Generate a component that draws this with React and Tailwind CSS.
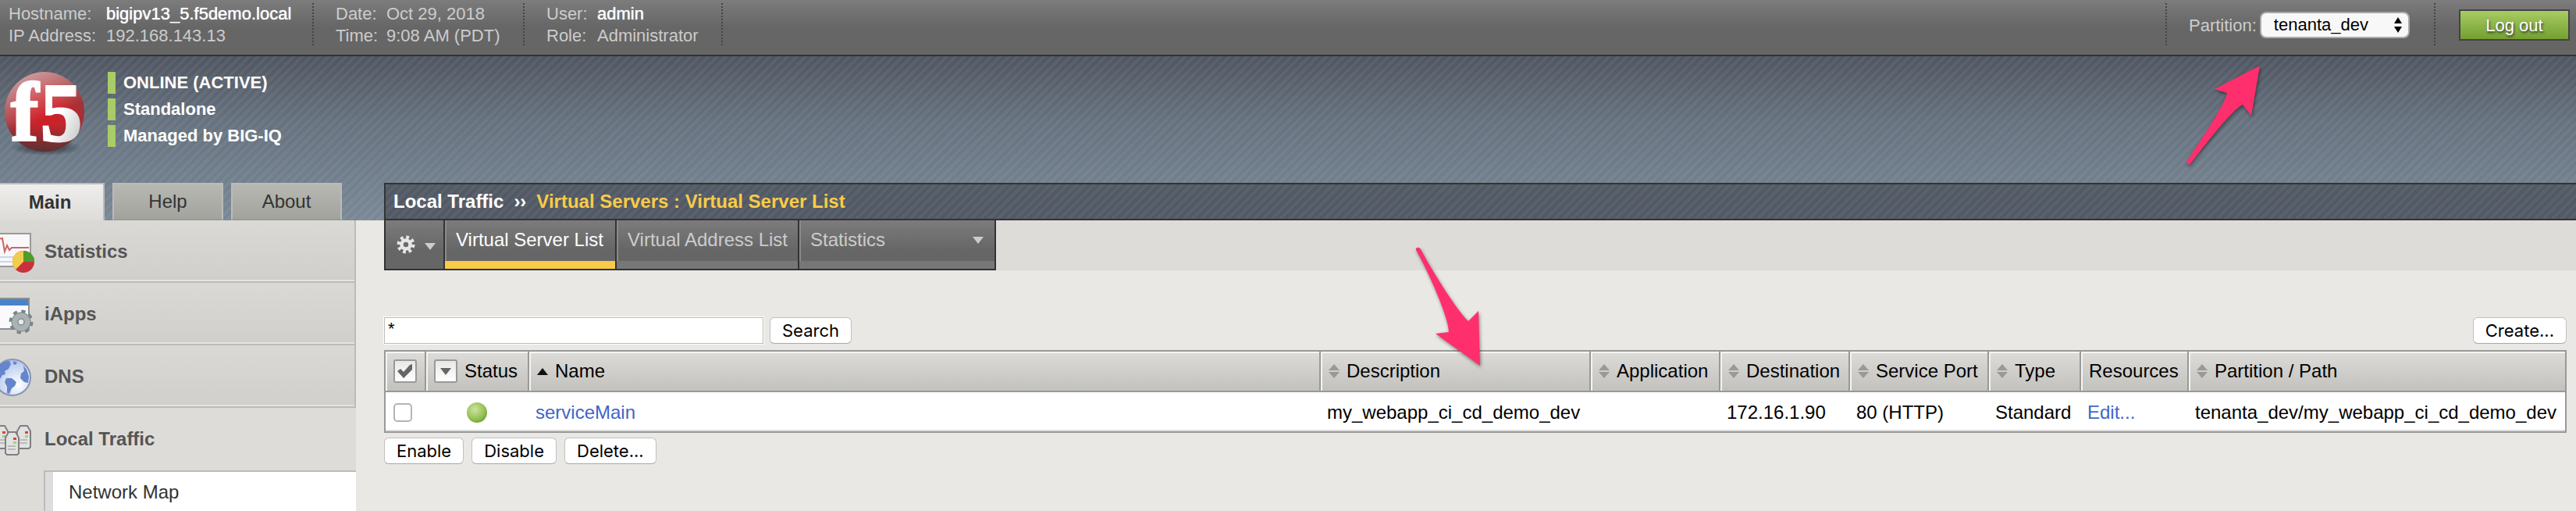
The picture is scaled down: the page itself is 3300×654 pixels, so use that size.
import React from "react";

const stripes =
  "bg-[repeating-linear-gradient(135deg,#ffffff0d_0px,#ffffff0d_4px,transparent_4px,transparent_8px)]";

function HeaderInfo({ rows, layout }) {
  return (
    <dl className={`grid leading-7 ${layout}`}>
      {rows.map(([label, value, strong]) => (
        <React.Fragment key={label}>
          <dt>{label}</dt>
          <dd className={strong ? "text-white [text-shadow:0_0_1px_#fff]" : ""}>{value}</dd>
        </React.Fragment>
      ))}
    </dl>
  );
}

function Dots() {
  return (
    <span className="h-14 w-[2px] shrink-0 bg-[repeating-linear-gradient(180deg,#444_0px,#444_2px,transparent_2px,transparent_4px)]" />
  );
}

function TopBar() {
  return (
    <header className="flex h-[72px] items-start justify-between border-b-2 border-[#333] bg-linear-to-b from-[#7c7c7c] to-[#666] to-50% pt-1 pr-2 text-[22px] text-[#ccc]">
      <div className="flex">
        <HeaderInfo
          layout="w-[400px] grid-cols-[125px_1fr] pl-[11px]"
          rows={[
            ["Hostname:", "bigipv13_5.f5demo.local", true],
            ["IP Address:", "192.168.143.13"],
          ]}
        />
        <Dots />
        <HeaderInfo
          layout="w-[268px] grid-cols-[65px_1fr] pl-7"
          rows={[
            ["Date:", "Oct 29, 2018"],
            ["Time:", "9:08 AM (PDT)"],
          ]}
        />
        <Dots />
        <HeaderInfo
          layout="w-[252px] grid-cols-[65px_1fr] pl-7"
          rows={[
            ["User:", "admin", true],
            ["Role:", "Administrator"],
          ]}
        />
        <Dots />
      </div>
      <div className="flex">
        <Dots />
        <div className="flex h-14 w-[342px] items-center gap-1 pl-7">
          <label htmlFor="partition">Partition:</label>
          <div className="relative">
            <select
              id="partition"
              className="block h-[34px] w-[192px] appearance-none rounded-lg border-2 border-[#aaa] bg-[#f8f8f8] pl-4 text-[22px] leading-7 text-black"
            >
              <option>tenanta_dev</option>
            </select>
            <svg className="pointer-events-none absolute top-[7px] right-[10px]" width="10" height="20" viewBox="0 0 10 20" fill="#000">
              <path d="M5 0 10 8H0zM5 20 0 12h10z" />
            </svg>
          </div>
        </div>
        <Dots />
        <button className="mt-2 ml-[30px] h-10 w-[142px] border-2 border-[#444] bg-linear-to-b from-[#a8cc62] to-[#73a030] text-white [text-shadow:1px_2px_3px_#333]">
          Log out
        </button>
      </div>
    </header>
  );
}

function Logo() {
  return (
    <svg className="block overflow-visible" width="104" height="120" viewBox="0 0 104 120" role="img" aria-label="F5">
      <defs>
        <radialGradient id="ball" cx="0.5" cy="0.55" r="0.55">
          <stop offset="0" stopColor="#cf1f27" />
          <stop offset="0.55" stopColor="#c2272d" />
          <stop offset="1" stopColor="#96363a" />
        </radialGradient>
        <linearGradient id="shine" x1="0.2" y1="0" x2="0.45" y2="0.6">
          <stop offset="0" stopColor="#fff" stopOpacity="0.55" />
          <stop offset="1" stopColor="#fff" stopOpacity="0" />
        </linearGradient>
        <linearGradient id="shade" x1="0" y1="0" x2="0" y2="1">
          <stop offset="0.65" stopColor="#503030" stopOpacity="0" />
          <stop offset="1" stopColor="#503030" stopOpacity="0.85" />
        </linearGradient>
        <linearGradient id="glyph" x1="0" y1="0" x2="1" y2="1">
          <stop offset="0.5" stopColor="#fff" />
          <stop offset="1" stopColor="#b4b4b4" />
        </linearGradient>
        <radialGradient id="ground">
          <stop offset="0" stopColor="#1d242c" stopOpacity="0.9" />
          <stop offset="1" stopColor="#1d242c" stopOpacity="0" />
        </radialGradient>
      </defs>
      <ellipse cx="53" cy="97" rx="46" ry="10" fill="url(#ground)" />
      <circle cx="51" cy="51" r="51" fill="url(#ball)" />
      <circle cx="51" cy="51" r="51" fill="url(#shine)" />
      <circle cx="51" cy="51" r="51" fill="url(#shade)" />
      <g fontFamily="Liberation Serif, serif" fontWeight="700" fontSize="106" strokeWidth="3">
        <text x="8" y="87" fill="#fff" stroke="#fff">
          f
        </text>
        <text x="46" y="88" fill="url(#glyph)" stroke="url(#glyph)">
          5
        </text>
      </g>
    </svg>
  );
}

function Banner() {
  return (
    <div className="flex h-[162px] pt-5 pl-[6px]">
      <Logo />
      <ul className="ml-7 flex flex-col gap-[6px] text-[22px] leading-7 font-bold text-white">
        {["ONLINE (ACTIVE)", "Standalone", "Managed by BIG-IQ"].map((t) => (
          <li key={t} className="border-l-10 border-[#a9cc66] pl-[10px]">
            {t}
          </li>
        ))}
      </ul>
    </div>
  );
}

function StatsIcon() {
  return (
    <svg width="48" height="56" viewBox="0 0 48 56">
      <rect x="-6" y="5" width="45" height="42" fill="#f8f8fa" stroke="#999" strokeWidth="2" />
      <path d="M0 35h20M0 41h20" stroke="#c5d8ea" strokeWidth="2" />
      <path d="M-2 12 3 11 6 28 9 20 12 26 15 23H37" fill="none" stroke="#c66" strokeWidth="2" />
      <circle cx="30" cy="41" r="14" fill="#c8323c" />
      <path d="M30 41V27a14 14 0 0 1 14 14z" fill="#4f9c2c" />
      <path d="M30 41V27a14 14 0 0 0-10 24z" fill="#f2cc4c" />
    </svg>
  );
}

function IAppsIcon() {
  return (
    <svg width="48" height="56" viewBox="0 0 48 56">
      <rect x="-6" y="8" width="43" height="39" fill="#fafafc" stroke="#8a8f96" strokeWidth="2" />
      <rect x="-4" y="9" width="40" height="8" fill="#4a84c8" />
      <circle cx="27" cy="38" r="13" fill="none" stroke="#7b8585" strokeWidth="5" strokeDasharray="5 5.2" />
      <circle cx="27" cy="38" r="8" fill="none" stroke="#7b8585" strokeWidth="9" />
      <circle cx="27" cy="38" r="8" fill="none" stroke="#a9b3b3" strokeWidth="7" />
      <circle cx="27" cy="38" r="4" fill="#e8e8e8" stroke="#7b8585" />
    </svg>
  );
}

function DnsIcon() {
  return (
    <svg width="48" height="56" viewBox="0 0 48 56">
      <defs>
        <radialGradient id="globe" cx="0.65" cy="0.7" r="0.75">
          <stop offset="0" stopColor="#fff" />
          <stop offset="1" stopColor="#a9bfe9" />
        </radialGradient>
      </defs>
      <circle cx="16" cy="29" r="23" fill="url(#globe)" stroke="#8796b8" strokeWidth="2" />
      <path d="M-6 20C-2 12 4 8 12 8l2 4-3 6-5 3 1 4-4 1-3 5-6-4zM8 30l7 0 6 5-2 5-4 3-3 7-3-1 0-8-3-6zM30 14l4 5 3 9-1 8-5-1-5-5 1-6 4-3zM17 8l5 2-2 3-3-1z" fill="#6585cc" />
    </svg>
  );
}

function Server({ x, y }) {
  return (
    <g transform={`translate(${x} ${y})`}>
      <path d="M1 8 5 1h9l4 7v20l-2 2H3l-2-2z" fill="#e2e2e2" stroke="#808080" strokeWidth="2" />
      <path d="M4 19h10M4 23h10" stroke="#bbb" strokeWidth="2" />
      <rect x="11" y="8" width="4" height="3" fill="#d8434b" />
      <rect x="11" y="13" width="4" height="3" fill="#93dc71" />
    </g>
  );
}

function TrafficIcon() {
  return (
    <svg width="48" height="56" viewBox="0 0 48 56">
      <Server x={-8} y={10} />
      <Server x={21} y={10} />
      <Server x={6} y={18} />
    </svg>
  );
}

const menu = [
  ["Statistics", StatsIcon],
  ["iApps", IAppsIcon],
  ["DNS", DnsIcon],
];

function Sidebar() {
  return (
    <aside className="w-[456px] shrink-0 bg-[#dedcd9] text-2xl leading-7">
      <nav aria-label="Main menu">
        {menu.map(([name, Icon]) => (
          <a
            key={name}
            href="#"
            className="flex h-20 items-center gap-[9px] border-r-2 border-b-2 border-[#bbb] bg-linear-to-b from-[#dad9d5] to-[#d0cfcb] pt-[2px] font-bold text-[#555] shadow-[inset_0_-2px_0_#e4e3e0]"
          >
            <Icon />
            {name}
          </a>
        ))}
        <a href="#" className="flex h-20 items-center gap-[9px] font-bold text-[#555]">
          <TrafficIcon />
          Local Traffic
        </a>
        <div className="ml-14 border-t-2 border-l-2 border-[#bbb]">
          <a href="#" className="flex h-[50px] items-center border-l-10 border-[#ddd] bg-white pt-[2px] pl-5 text-[#333]">
            Network Map
          </a>
        </div>
      </nav>
    </aside>
  );
}

function Tabs() {
  const idle =
    "h-12 w-[142px] border-2 border-[#bbb] border-b-[#999] bg-linear-to-b from-[#b8b8b3] to-[#a3a39e] text-[#333]";
  return (
    <div className="flex w-[456px] shrink-0 gap-[10px] text-2xl">
      <button className="h-12 w-[134px] border-t-2 border-r-2 border-[#bbb] bg-linear-to-b from-[#efeeec] to-[#dedcd9] pr-1 font-bold text-[#333]">
        Main
      </button>
      <button className={idle}>Help</button>
      <button className={idle}>About</button>
    </div>
  );
}

function NavTabs() {
  const cell =
    "relative flex h-16 items-start border-r-2 border-b-2 border-[#333] pt-[11px] pl-[14px] shadow-[inset_2px_0_0_#8a8a8a]";
  return (
    <div className="flex bg-[#dedcd9]">
      <nav
        aria-label="Virtual server views"
        className="flex border-l-2 border-[#333] bg-linear-to-b from-[#7c7c7c] to-[#666] to-60% text-2xl leading-7 text-[#ccc]"
      >
        <button aria-label="Options" className="flex h-16 w-[76px] items-center gap-3 border-r-2 border-b-2 border-[#333] pl-[14px]">
          <svg width="24" height="24" viewBox="0 0 26 26">
            <circle cx="13" cy="13" r="10" fill="none" stroke="#e6e6e6" strokeWidth="5" strokeDasharray="4 3.85" />
            <circle cx="13" cy="13" r="6" fill="none" stroke="#e6e6e6" strokeWidth="5" />
          </svg>
          <svg className="mt-1" width="14" height="9" viewBox="0 0 14 9">
            <path d="M0 0h14L7 9z" fill="#ccc" />
          </svg>
        </button>
        <a href="#" className={`${cell} w-[220px] text-white`}>
          Virtual Server List
          <span className="absolute inset-x-0 bottom-0 h-[10px] bg-[#f9cb48]" />
        </a>
        <a href="#" className={`${cell} w-[234px]`}>
          Virtual Address List
          <span className="absolute inset-x-0 bottom-0 h-[10px] bg-[#777]" />
        </a>
        <a href="#" className={`${cell} w-[252px] justify-between pr-[14px]`}>
          Statistics
          <svg className="mt-[10px]" width="14" height="9" viewBox="0 0 14 9">
            <path d="M0 0h14L7 9z" fill="#ccc" />
          </svg>
          <span className="absolute inset-x-0 bottom-0 h-[10px] bg-[#777]" />
        </a>
      </nav>
    </div>
  );
}

function MacButton({ children }) {
  return (
    <button className="h-[34px] rounded-md border border-[#c0c0c0] border-b-[#a8a8a8] bg-white px-[15px] font-[Inter,sans-serif] text-[22px] leading-7 text-black">
      {children}
    </button>
  );
}

function Sort() {
  return (
    <svg className="shrink-0" width="14" height="18" viewBox="0 0 14 18" fill="#999">
      <path d="M7 0 14 8H0zM7 18 0 10h14z" />
    </svg>
  );
}

const sortable = "flex items-center gap-[9px]";

function ServerTable() {
  const th =
    "h-[52px] border-b-2 border-l-2 border-[#999] bg-linear-to-b from-[#dedcd9] to-[#c2c1bd] pl-[10px] text-left font-normal shadow-[inset_2px_2px_0_#f4f4f2] first:border-l-0";
  const td = "h-[50px] border-b-2 border-[#ddd] pt-[3px] pl-[10px]";
  const boxed =
    "flex size-[30px] items-center justify-center rounded-[3px] border-2 border-[#999] bg-linear-to-b from-[#e8e8e6] to-white";
  return (
    <table className="w-full table-fixed border-separate border-spacing-0 border-2 border-[#999] bg-white text-2xl leading-7 whitespace-nowrap text-black">
      <colgroup>
        <col className="w-[50px]" />
        <col className="w-[132px]" />
        <col />
        <col className="w-[346px]" />
        <col className="w-[166px]" />
        <col className="w-[166px]" />
        <col className="w-[178px]" />
        <col className="w-[118px]" />
        <col className="w-[138px]" />
        <col className="w-[484px]" />
      </colgroup>
      <thead>
        <tr>
          <th className={th}>
            <button aria-label="Select all" className={boxed}>
              <svg width="20" height="18" viewBox="0 0 20 18">
                <path d="M0 9 4 6 8 10 16 1 19 0v7L8 18z" fill="#666" />
              </svg>
            </button>
          </th>
          <th className={th}>
            <span className={sortable}>
              <button aria-label="Filter status" className={boxed}>
                <svg width="14" height="9" viewBox="0 0 14 9">
                  <path d="M0 0h14L7 9z" fill="#666" />
                </svg>
              </button>
              Status
            </span>
          </th>
          <th className={th}>
            <span className={sortable}>
              <svg width="14" height="9" viewBox="0 0 14 9">
                <path d="M7 0 14 9H0z" fill="#111" />
              </svg>
              Name
            </span>
          </th>
          {["Description", "Application", "Destination", "Service Port", "Type"].map((h) => (
            <th key={h} className={th}>
              <span className={sortable}>
                <Sort />
                {h}
              </span>
            </th>
          ))}
          <th className={th}>Resources</th>
          <th className={th}>
            <span className={sortable}>
              <Sort />
              Partition / Path
            </span>
          </th>
        </tr>
      </thead>
      <tbody>
        <tr>
          <td className={td}>
            <input
              type="checkbox"
              aria-label="Select serviceMain"
              className="block size-6 appearance-none rounded-[5px] border-2 border-[#b4b4b4] bg-white"
            />
          </td>
          <td className={td}>
            <svg className="ml-11 block" width="26" height="26" viewBox="0 0 26 26" role="img" aria-label="Available">
              <defs>
                <radialGradient id="ok" cx="0.4" cy="0.35" r="0.65">
                  <stop offset="0" stopColor="#cfe3a4" />
                  <stop offset="0.7" stopColor="#98c255" />
                  <stop offset="1" stopColor="#76a843" />
                </radialGradient>
              </defs>
              <circle cx="13" cy="13" r="13" fill="url(#ok)" />
            </svg>
          </td>
          <td className={td}>
            <a href="#" className="text-[#3f66c8]">serviceMain</a>
          </td>
          <td className={td}>my_webapp_ci_cd_demo_dev</td>
          <td className={td} />
          <td className={td}>172.16.1.90</td>
          <td className={td}>80 (HTTP)</td>
          <td className={td}>Standard</td>
          <td className={td}>
            <a href="#" className="text-[#3f66c8]">Edit...</a>
          </td>
          <td className={td}>tenanta_dev/my_webapp_ci_cd_demo_dev</td>
        </tr>
      </tbody>
    </table>
  );
}

function Arrow({ className, children, width, height }) {
  return (
    <svg
      className={`pointer-events-none absolute drop-shadow-[1px_2px_2px_rgba(0,0,0,0.45)] ${className}`}
      width={width}
      height={height}
      viewBox={`0 0 ${width} ${height}`}
      fill="#ff2f6d"
    >
      {children}
    </svg>
  );
}

export default function App() {
  return (
    <div className="relative min-h-screen overflow-hidden bg-[#e9e8e4] font-['Liberation_Sans',Arial,sans-serif]">
      <TopBar />
      <div className="bg-linear-to-b from-[#505661] via-[#66727f] via-40% to-[#7a8896]">
        <div className={stripes}>
          <Banner />
          <div className="flex">
            <Tabs />
            <div className="ml-9 flex-1 border-2 border-r-0 border-[#333] bg-[#515964]">
              <div className={`flex h-11 items-center gap-[13px] pl-[10px] text-2xl font-bold text-white ${stripes}`}>
                <span>Local Traffic</span>
                <span>››</span>
                <span className="text-[#f9cb48]">Virtual Servers : Virtual Server List</span>
              </div>
            </div>
          </div>
        </div>
      </div>
      <div className="flex">
        <Sidebar />
        <main className="ml-9 min-w-0 flex-1">
          <NavTabs />
          <div className="pr-3">
            <div className="flex items-center justify-between pt-[60px] pb-2">
              <div className="flex items-center gap-2">
                <input
                  aria-label="Search virtual servers"
                  defaultValue="*"
                  className="h-[34px] w-[486px] border border-[#bbb] bg-white px-1 pb-1 text-[22px] text-black outline-1 outline-white"
                />
                <MacButton>Search</MacButton>
              </div>
              <MacButton>Create...</MacButton>
            </div>
            <ServerTable />
            <div className="flex gap-[10px] pt-[6px]">
              <MacButton>Enable</MacButton>
              <MacButton>Disable</MacButton>
              <MacButton>Delete...</MacButton>
            </div>
          </div>
        </main>
      </div>
      <Arrow className="top-[84px] right-[404px]" width={96} height={128}>
        <path d="M95 0 37 30 53 35C50 50 20 95 1 123Q1 128 6 126C20 108 60 55 73 50L84 64z" />
      </Arrow>
      <Arrow className="top-[316px] left-[1814px]" width={84} height={154}>
        <path d="M0 2Q3-1 6 3C20 30 55 85 67 95L80 82 82 152 25 111 42 109C42 90 15 30 0 4z" />
      </Arrow>
    </div>
  );
}
